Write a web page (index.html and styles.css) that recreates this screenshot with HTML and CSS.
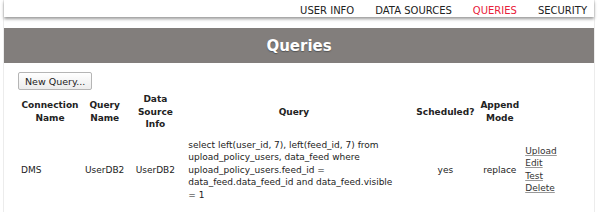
FILE: index.html
```html
<!DOCTYPE html>
<html lang="en">
<head>
    <meta charset="UTF-8">
    <title>Queries</title>
    <link rel="stylesheet" href="styles.css">
</head>
<body>
    <div class="page">
        <div class="topnav">
            <a href="#">USER INFO</a>
            <a href="#">DATA SOURCES</a>
            <a href="#" class="active">QUERIES</a>
            <a href="#">SECURITY</a>
        </div>
        <h1 class="title">Queries</h1>
        <div class="content">
            <button class="btn">New Query...</button>
            <table class="queries">
                <tr>
                    <th class="c1">Connection<br>Name</th>
                    <th class="c2">Query<br>Name</th>
                    <th class="c3">Data<br>Source<br>Info</th>
                    <th class="c4">Query</th>
                    <th class="c5">Scheduled?</th>
                    <th class="c6">Append<br>Mode</th>
                    <th class="c7"></th>
                </tr>
                <tr>
                    <td class="left">DMS</td>
                    <td>UserDB2</td>
                    <td>UserDB2</td>
                    <td class="left sql">select left(user_id, 7), left(feed_id, 7) from upload_policy_users, data_feed where upload_policy_users.feed_id = data_feed.data_feed_id and data_feed.visible = 1</td>
                    <td>yes</td>
                    <td>replace</td>
                    <td class="left actions">
                        <a href="#">Upload</a><br>
                        <a href="#">Edit</a><br>
                        <a href="#">Test</a><br>
                        <a href="#">Delete</a>
                    </td>
                </tr>
            </table>
        </div>
    </div>
</body>
</html>
```

FILE: styles.css
```css
body {
    margin: 0;
    background: #fff;
    font-family: "DejaVu Sans", Verdana, sans-serif;
    font-size: 9px;
    color: #222;
}
.page {
    margin: 0 5px 0 3px;
    border-left: 1px solid #ececec;
    border-right: 1px solid #ececec;
    height: 212px;
}
.topnav {
    height: 17px;
    background: #fff;
    box-shadow: 0 2px 3px #999;
    display: flex;
    justify-content: flex-end;
    align-items: center;
    gap: 21px;
    padding-right: 7px;
}
.topnav a {
    color: #222;
    text-decoration: none;
    font-size: 10px;
    padding-top: 3px;
}
.topnav a.active {
    color: #e8203a;
}
.title {
    margin: 11px 0 0;
    height: 35px;
    line-height: 36px;
    background: #827e7c;
    color: #fff;
    text-align: center;
    font-size: 15px;
    font-weight: bold;
    text-shadow: 0 1px 1px #555;
}
.content {
    padding: 9px 0 0 14px;
}
.btn {
    font-family: "DejaVu Sans", Verdana, sans-serif;
    font-size: 9.5px;
    color: #222;
    background: linear-gradient(#fff, #ececec);
    border: 1px solid #b5b5b5;
    border-radius: 2px;
    padding: 2px 6px;
    height: 18px;
}
.queries {
    border-collapse: collapse;
    margin-top: 3px;
}
.queries th {
    font-weight: bold;
    padding: 0 3px;
    line-height: 12.5px;
    vertical-align: middle;
}
.queries td {
    text-align: center;
    padding: 8px 3px 15px;
    line-height: 12.5px;
}
.queries td.left {
    text-align: left;
}
.queries td.sql,
.queries th.c4 {
    padding-left: 5px;
    padding-right: 14px;
}
.c1 { width: 58px; }
.c2 { width: 39px; }
.c3 { width: 50px; }
.c4 { width: 211px; }
.c5 { width: 56px; }
.c6 { width: 34px; }
.c7 { width: 36px; }
.actions a {
    color: #333;
    text-decoration: underline;
    text-decoration-color: #999;
}
```
